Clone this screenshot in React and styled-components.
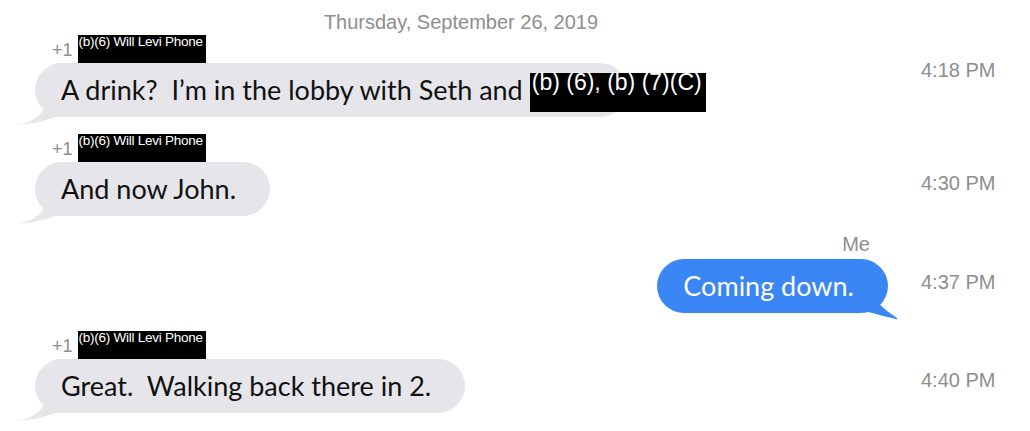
import React from "react";
import styled, { createGlobalStyle } from "styled-components";

const Global = createGlobalStyle`
  html, body { margin: 0; padding: 0; background: #ffffff; }
  body { font-family: "Liberation Sans", Arial, sans-serif; }
`;

const Page = styled.div`
  width: 1030px;
  height: 431px;
  overflow: hidden;
  padding-top: 11px;
  box-sizing: border-box;
  display: flex;
  flex-direction: column;
`;

const DateLine = styled.div`
  width: 922px;
  text-align: center;
  font: 20px/23px "Liberation Sans", Arial, sans-serif;
  color: #8e8e8e;
`;

const Row = styled.div`
  display: grid;
  grid-template-columns: 921px auto;
  margin-top: ${(p) => p.$gap}px;
`;

const MessageCol = styled.div`
  display: flex;
  flex-direction: column;
  align-items: ${(p) => (p.$me ? "flex-end" : "flex-start")};
  padding-left: ${(p) => (p.$me ? 0 : 35)}px;
  padding-right: ${(p) => (p.$me ? 33 : 0)}px;
`;

const SenderLine = styled.div`
  display: flex;
  align-items: flex-end;
  gap: 5px;
  height: 28px;
  padding-left: 17px;
`;

const Plus = styled.span`
  font: 18px/18px "Liberation Sans", Arial, sans-serif;
  color: #8e8e8e;
  margin-bottom: 4px;
`;

const SmallRedact = styled.span`
  display: block;
  box-sizing: border-box;
  width: 128px;
  height: 28px;
  background: #000;
  color: #fff;
  font: 13.5px/12px "Liberation Sans", Arial, sans-serif;
  letter-spacing: -0.25px;
  padding: 1px 0 0 1px;
  white-space: nowrap;
  overflow: hidden;
`;

const MeLabel = styled.div`
  font: 20px/23px "Liberation Sans", Arial, sans-serif;
  color: #8e8e8e;
  padding-right: 18px;
  margin-bottom: 3px;
`;

const Bubble = styled.div`
  position: relative;
  display: inline-flex;
  align-items: center;
  box-sizing: border-box;
  height: 54px;
  ${(p) => (p.$width ? `width: ${p.$width}px;` : "")}
  border-radius: 27px;
  padding: 0 34px 0 26px;
  background: ${(p) => (p.$me ? "#3b86f5" : "#e5e5ea")};
  color: ${(p) => (p.$me ? "#ffffff" : "#111111")};
  font-family: Lato, "Open Sans", sans-serif;
  font-size: 27px;
  line-height: 32px;
  white-space: pre;
`;

const BigRedact = styled.span`
  display: block;
  flex-shrink: 0;
  box-sizing: border-box;
  width: 176px;
  height: 39px;
  margin-left: 7px;
  margin-top: 5px;
  background: #000;
  color: #fff;
  font: 23px/18px "Liberation Sans", Arial, sans-serif;
  padding-left: 2px;
  white-space: nowrap;
`;

const TailSvg = styled.svg`
  position: absolute;
  ${(p) =>
    p.$me
      ? "right: -12px; bottom: -8px;"
      : "left: -20px; bottom: -10px;"}
  overflow: visible;
`;

const Time = styled.div`
  font: 20px/23px "Liberation Sans", Arial, sans-serif;
  color: #8e8e8e;
  margin-top: ${(p) => p.$top}px;
  white-space: nowrap;
`;

function Tail({ me }) {
  if (me) {
    return (
      <TailSvg $me width="40" height="22" viewBox="0 0 40 22">
        <path d="M0 0 L0 13 L8 13 Q20 16 37 20.5 L37 19 Q26 12 18 4 L18 0 Z" fill="#3b86f5" />
      </TailSvg>
    );
  }
  return (
    <TailSvg width="47" height="20" viewBox="0 0 47 20">
      <path d="M28 0 L28 3 Q22 14 3 18 Q25 16 40 10 L47 10 L47 0 Z" fill="#e5e5ea" />
    </TailSvg>
  );
}

function Incoming({ gap, time, timeTop, width, children }) {
  return (
    <Row $gap={gap}>
      <MessageCol>
        <SenderLine>
          <Plus>+1</Plus>
          <SmallRedact>(b)(6) Will Levi Phone</SmallRedact>
        </SenderLine>
        <Bubble $width={width}>
          {children}
          <Tail />
        </Bubble>
      </MessageCol>
      <Time $top={timeTop}>{time}</Time>
    </Row>
  );
}

export default function App() {
  return (
    <>
      <Global />
      <Page>
        <DateLine>Thursday, September 26, 2019</DateLine>
        <Incoming gap={1} time="4:18 PM" timeTop={24} width={592}>
          <span>A drink?  I’m in the lobby with Seth and</span>
          <BigRedact>(b) (6), (b) (7)(C)</BigRedact>
        </Incoming>
        <Incoming gap={17} time="4:30 PM" timeTop={38}>
          <span>And now John.</span>
        </Incoming>
        <Row $gap={17}>
          <MessageCol $me>
            <MeLabel>Me</MeLabel>
            <Bubble $me>
              <span>Coming down.</span>
              <Tail me />
            </Bubble>
          </MessageCol>
          <Time $top={38}>4:37 PM</Time>
        </Row>
        <Incoming gap={18} time="4:40 PM" timeTop={38}>
          <span>Great.  Walking back there in 2.</span>
        </Incoming>
      </Page>
    </>
  );
}
